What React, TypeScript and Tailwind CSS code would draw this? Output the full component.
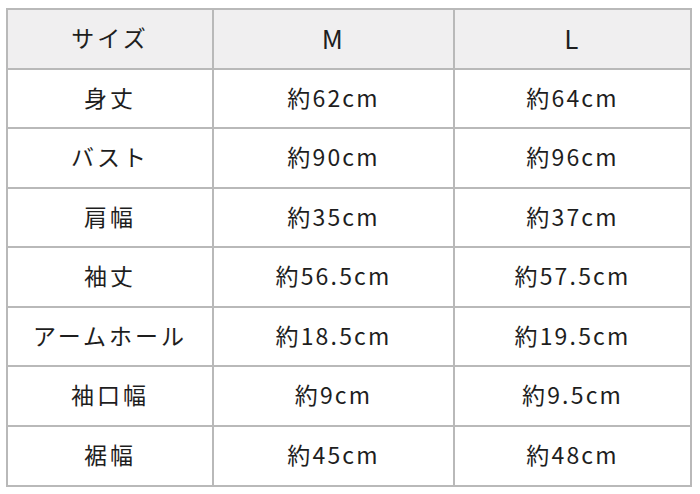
import React from 'react'

const rows = [
  ['身丈', '約62cm', '約64cm'],
  ['バスト', '約90cm', '約96cm'],
  ['肩幅', '約35cm', '約37cm'],
  ['袖丈', '約56.5cm', '約57.5cm'],
  ['アームホール', '約18.5cm', '約19.5cm'],
  ['袖口幅', '約9cm', '約9.5cm'],
  ['裾幅', '約45cm', '約48cm'],
]

const font = { fontFamily: '"Noto Sans CJK JP", "Noto Sans", sans-serif' }

const Cell: React.FC<{ children: React.ReactNode; head?: boolean; label?: boolean; big?: boolean }> = ({
  children,
  head,
  label,
  big,
}) => (
  <div
    className={`flex items-center justify-center pb-[3px] text-[#1e1e1e] ${big ? 'text-[26px]' : 'text-[23px]'} ${label ? 'tracking-[0.13em]' : 'tracking-[0.095em]'} ${head ? 'bg-[#f0eff0]' : 'bg-white'}`}
  >
    {children}
  </div>
)

export default function App() {
  return (
    <div className="w-[700px] h-[494px] bg-white pt-[8px] pl-[6px]" style={font}>
      <div className="grid w-[686px] grid-cols-[204px_239px_235px] grid-rows-[58px_57px_58px_57px_58px_57px_58px_58px] gap-[2px] bg-[#b9b9b9] p-[2px]">
        <Cell head label>サイズ</Cell>
        <Cell head big>M</Cell>
        <Cell head big>L</Cell>
        {rows.map((r) => (
          <React.Fragment key={r[0]}>
            <Cell label>{r[0]}</Cell>
            <Cell>{r[1]}</Cell>
            <Cell>{r[2]}</Cell>
          </React.Fragment>
        ))}
      </div>
    </div>
  )
}
